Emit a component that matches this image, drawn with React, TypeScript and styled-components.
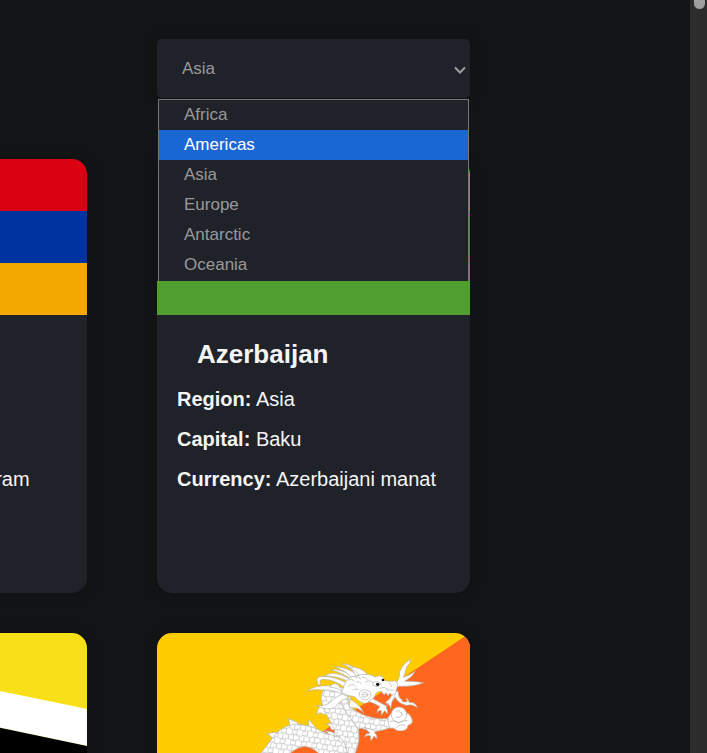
import React from "react";
import styled, { createGlobalStyle } from "styled-components";

const GlobalStyle = createGlobalStyle`
  *, *::before, *::after { box-sizing: border-box; }
  body {
    margin: 0;
    background: #131416;
    color: #f5f5f5;
    font-family: "Liberation Sans", Arial, sans-serif;
    overflow: hidden;
  }
`;

const Page = styled.div`
  display: grid;
  grid-template-columns: minmax(0, 1fr) 17px;
  height: 100vh;
`;

const Content = styled.main`
  overflow: hidden;
  padding: 39px 220px 0 0;
`;

const FilterBar = styled.div`
  display: flex;
  justify-content: flex-end;
  margin-bottom: 61px;
`;

const Filter = styled.div`
  position: relative;
  width: 313px;
`;

const RegionSelect = styled.select`
  display: block;
  width: 100%;
  height: 59px;
  padding: 0 0 0 25px;
  border: 0;
  border-radius: 5px;
  outline: 0;
  appearance: none;
  background-color: #202229;
  color: #999;
  font-family: inherit;
  font-size: 17px;
  box-shadow: 0 0 12px rgba(0, 0, 0, 0.2);
`;

const Chevron = styled.svg`
  position: absolute;
  top: 25px;
  right: 4px;
  width: 12px;
  height: 12px;
  pointer-events: none;
`;

const Options = styled.ul`
  position: absolute;
  z-index: 1;
  top: 60px;
  left: 1px;
  right: 1px;
  margin: 0;
  padding: 0 0 1px;
  list-style: none;
  background: #202229;
  border: solid #767676;
  border-width: 1px 1px 0;
  box-shadow: -1px 0 0 #131416;
`;

const Option = styled.li<{ $active: boolean }>`
  padding-left: 25px;
  font-size: 17px;
  line-height: 30px;
  color: ${(p) => (p.$active ? "#fff" : "#999")};
  background: ${(p) => (p.$active ? "#1967d2" : "transparent")};
`;

const Countries = styled.section`
  display: grid;
  grid-template-columns: repeat(2, 313px);
  justify-content: end;
  gap: 40px 70px;
`;

const Card = styled.article`
  min-height: 434px;
  overflow: hidden;
  border-radius: 15px;
  background: #202229;
  box-shadow: 0 0 12px rgba(0, 0, 0, 0.2);
`;

const Flag = styled.svg`
  display: block;
  width: 100%;
  height: auto;
`;

const Details = styled.div`
  padding: 24px 20px;
`;

const Name = styled.h2`
  margin: 0 20px 10px;
  font-size: 26px;
  line-height: 30px;
`;

const Fact = styled.p`
  margin: 0;
  font-size: 20px;
  line-height: 40px;
  white-space: nowrap;
`;

const ScrollTrack = styled.div`
  display: flex;
  justify-content: flex-end;
  align-items: flex-start;
  padding-right: 2px;
  background: #2c2c2c;
`;

const ScrollThumb = styled.div`
  width: 11px;
  height: 9px;
  border-radius: 0 0 6px 6px;
  background: #9f9f9f;
`;

function Stripes({ colors }: { colors: string[] }) {
  return (
    <Flag viewBox="0 0 313 156" aria-hidden="true">
      {colors.map((c, i) => (
        <rect key={c} y={i * 52} width="313" height="52" fill={c} />
      ))}
    </Flag>
  );
}

function Brunei() {
  return (
    <Flag viewBox="0 0 313 156" aria-hidden="true">
      <rect width="313" height="156" fill="#f7e017" />
      <path d="M0 11 313 76V113L0 47Z" fill="#fff" />
      <path d="M0 47 313 113V150L0 84Z" fill="#000" />
    </Flag>
  );
}

function Bhutan() {
  return (
    <Flag viewBox="0 0 313 209" aria-hidden="true">
      <defs>
        <pattern id="scales" width="32" height="32" patternUnits="userSpaceOnUse" patternTransform="rotate(8)">
          <rect width="32" height="32" fill="#fff" />
          <path
            d="M0 3Q8 -2 16 3Q24 7 32 3M0 19Q8 23 16 18Q24 14 32 19M8 1L7 21M24 5L25 16M0 19L1 32M16 18L15 32M0 0V3M16 0V3"
            fill="none"
            stroke="#b4b4b4"
            strokeWidth="2"
          />
        </pattern>
      </defs>
      <rect width="313" height="209" fill="#ffcc00" />
      <path d="M313 0V209H0Z" fill="#ff671f" />
      <g transform="translate(83 7) scale(.33333)" stroke="#b0b0b0" strokeWidth="2" strokeLinejoin="round" strokeLinecap="round">
        {/* back spines */}
        <g fill="#fff">
          <path d="M98 306Q98 286 81 282Q105 274 118 280L128 268Z" />
          <path d="M145 266Q154 246 142 236Q162 242 170 246L184 262Z" />
          <path d="M202 266Q210 252 205 238Q220 254 226 262L236 278Z" />
          <path d="M262 286Q270 276 252 272Q274 272 286 282L292 296Z" />
          <path d="M274 268Q270 254 257 250Q276 252 286 250L294 272Z" />
          <path d="M252 224Q240 212 230 224Q232 204 248 194L264 212Z" />
        </g>
        {/* tail, body and foreleg */}
        <path
          d="M50 350C76 330 86 304 108 282C132 254 166 248 200 256C232 264 252 280 282 287C292 268 266 240 252 210C238 180 240 150 266 142L334 174C318 188 328 204 344 210C366 226 410 242 450 234L458 262C436 266 414 280 386 272C374 268 362 262 355 268C362 300 352 328 336 360L250 360C240 340 216 318 190 320C172 322 158 334 144 344L128 360Z"
          fill="url(#scales)"
        />
        <path d="M296 178Q322 224 356 270M278 292Q312 274 324 350" fill="none" />
        {/* mane */}
        <g fill="#fff">
          <path d="M229 197Q262 202 284 174L310 160L326 174Q296 180 286 202Q262 214 229 197Z" />
          <path d="M204 153Q220 136 268 137Q300 138 330 152L316 166Q280 148 250 150Q224 146 204 153Z" />
          <path d="M236 135Q224 116 238 110Q270 104 324 130L320 146Q282 118 250 118Q234 118 242 132Z" />
          <path d="M254 108Q278 88 328 116L336 130Q292 106 254 108Z" />
          <path d="M274 90Q302 84 334 108L336 118Q306 98 274 90Z" />
          <path d="M284 80Q322 80 352 106L336 112Q314 90 284 80Z" />
          <path d="M306 71Q346 74 362 102L348 108Q338 84 306 71Z" />
          <path d="M324 82Q362 78 382 103L362 112Q350 90 324 82Z" />
          <path d="M294 134Q276 126 270 142Q290 140 310 160Z" />
          <path d="M324 176Q354 184 371 219Q354 200 336 204Q322 200 330 186Z" />
        </g>
        {/* facial feelers */}
        <g fill="#fff">
          <path d="M466 130Q482 114 478 98Q488 72 511 58Q512 70 500 80Q496 98 490 112Q508 106 526 94Q516 112 494 124Q520 122 551 128Q524 140 478 139L464 142Z" />
          <path d="M456 158Q460 178 440 196Q458 186 466 172Q472 188 498 196Q516 190 532 202Q524 184 508 188Q504 174 498 174Q506 188 496 186Q482 186 486 178Q476 178 474 154Z" />
          <path d="M436 188Q452 176 458 162L464 168Q454 184 452 206Q450 190 436 188Z" />
        </g>
        {/* head */}
        <path
          d="M314 132Q320 110 350 108Q382 96 408 112Q414 102 430 112L434 122Q452 126 464 122Q478 130 470 146L466 162Q458 168 448 160L444 168L438 158L432 164L424 154Q408 154 404 168Q396 186 374 190Q354 186 344 170Q320 168 306 158Z"
          fill="#fff"
        />
        <path
          d="M326 120Q338 114 342 124M346 114Q358 106 362 118M326 138Q340 128 346 140M350 126Q360 122 364 132M366 112Q376 108 382 118M338 150Q346 144 356 148M376 126Q386 118 396 126Q402 136 414 140M420 144Q434 138 444 148M446 130Q456 130 454 140M440 150H462M358 158Q368 144 384 152Q398 158 390 172Q378 186 364 174Q354 168 358 158M368 158Q380 154 384 164Q380 174 368 170M364 164H384"
          fill="none"
        />
        <path d="M398 128Q410 120 424 132Q416 142 402 138Z" fill="#fff" />
        <g fill="#111" stroke="none">
          <circle cx="413" cy="133" r="5" />
          <circle cx="429" cy="120" r="4" />
        </g>
        {/* raised and lowered claws */}
        <g fill="#fff">
          <path d="M386 184Q404 190 420 200Q412 206 410 218Q420 208 424 212V226Q432 214 434 212L442 222Q444 208 438 202Q446 200 432 194Q414 184 398 176Z" />
          <path d="M374 264Q386 274 390 280Q376 280 374 290Q386 284 392 288V302Q400 294 402 288L411 296Q412 284 404 278Q408 272 402 270Z" />
          {/* pearl in its grip */}
          <path d="M444 234Q454 214 464 216L504 220Q518 232 517 246Q514 254 504 256Q502 272 486 272Q470 276 460 264Q448 268 446 254Z" />
          <circle cx="477" cy="224" r="23" />
        </g>
        <path d="M470 214Q478 206 480 218Q492 216 484 224M468 232Q480 236 488 224M450 244Q468 240 476 250Q486 240 502 242M468 264Q478 250 496 256" fill="none" />
      </g>
    </Flag>
  );
}

interface Country {
  name: string;
  region: string;
  capital: string;
  currency: string;
  flag: React.ReactNode;
}

const countries: Country[] = [
  {
    name: "Armenia",
    region: "Asia",
    capital: "Yerevan",
    currency: "Armenian dram",
    flag: <Stripes colors={["#d90012", "#0033a0", "#f2a800"]} />,
  },
  {
    name: "Azerbaijan",
    region: "Asia",
    capital: "Baku",
    currency: "Azerbaijani manat",
    flag: <Stripes colors={["#00b5e2", "#ef3340", "#509e2f"]} />,
  },
  {
    name: "Brunei",
    region: "Asia",
    capital: "Bandar Seri Begawan",
    currency: "Brunei dollar",
    flag: <Brunei />,
  },
  {
    name: "Bhutan",
    region: "Asia",
    capital: "Thimphu",
    currency: "Bhutanese ngultrum",
    flag: <Bhutan />,
  },
];

const regions = ["Africa", "Americas", "Asia", "Europe", "Antarctic", "Oceania"];
const highlighted = "Americas";

export default function App() {
  return (
    <>
      <GlobalStyle />
      <Page>
        <Content>
          <FilterBar>
            <Filter>
              <RegionSelect aria-label="Region" defaultValue="Asia">
                {regions.map((r) => (
                  <option key={r}>{r}</option>
                ))}
              </RegionSelect>
              <Chevron viewBox="0 0 12 12" aria-hidden="true">
                <path d="M1 3.5 6 8.5 11 3.5" fill="none" stroke="#a0a0a0" strokeWidth="2" />
              </Chevron>
              <Options role="listbox" aria-label="Region">
                {regions.map((r) => (
                  <Option key={r} role="option" aria-selected={r === "Asia"} $active={r === highlighted}>
                    {r}
                  </Option>
                ))}
              </Options>
            </Filter>
          </FilterBar>
          <Countries>
            {countries.map((c) => (
              <Card key={c.name}>
                {c.flag}
                <Details>
                  <Name>{c.name}</Name>
                  <Fact>
                    <strong>Region:</strong> {c.region}
                  </Fact>
                  <Fact>
                    <strong>Capital:</strong> {c.capital}
                  </Fact>
                  <Fact>
                    <strong>Currency:</strong> {c.currency}
                  </Fact>
                </Details>
              </Card>
            ))}
          </Countries>
        </Content>
        <ScrollTrack aria-hidden="true">
          <ScrollThumb />
        </ScrollTrack>
      </Page>
    </>
  );
}
